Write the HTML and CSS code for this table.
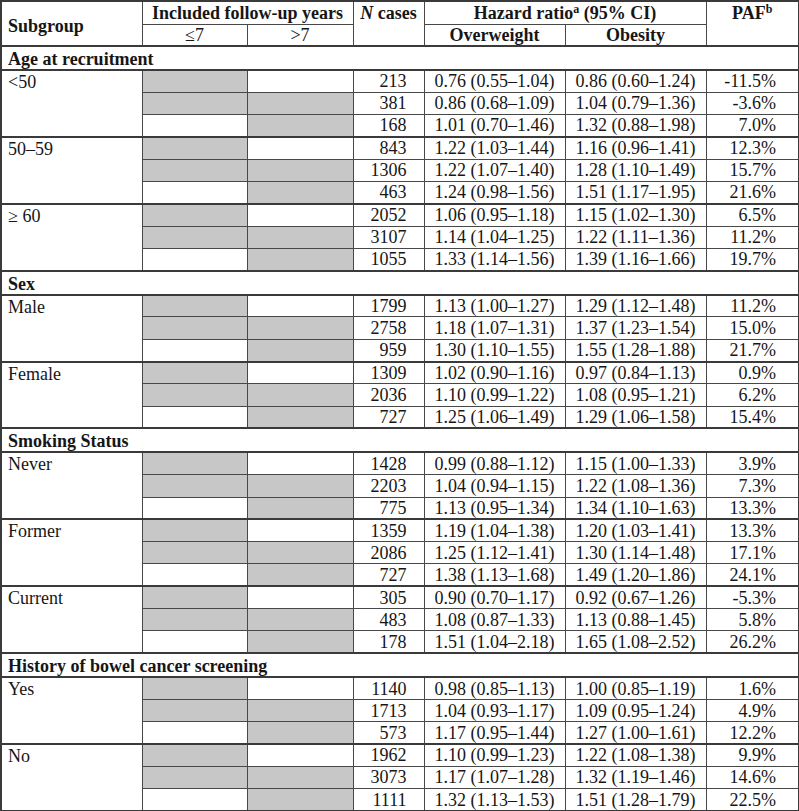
FILE: index.html
```html
<!DOCTYPE html>
<html>
<head>
<meta charset="utf-8">
<link rel="stylesheet" href="styles.css">
</head>
<body>
<table class="tbl">
<colgroup>
<col class="c-sub"><col class="c-y1"><col class="c-y2"><col class="c-n"><col class="c-ow"><col class="c-ob"><col class="c-paf">
</colgroup>
<thead>
<tr class="h1">
<th rowspan="2" class="h-sub"><span class="sub-txt">Subgroup</span></th>
<th colspan="2" class="h-c">Included follow-up years</th>
<th rowspan="2" class="h-top"><i>N</i> cases</th>
<th colspan="2" class="h-c">Hazard ratio<sup>a</sup> (95% CI)</th>
<th rowspan="2" class="h-top">PAF<sup>b</sup></th>
</tr>
<tr class="h2">
<th class="h-reg">≤7</th>
<th class="h-reg">&gt;7</th>
<th class="h-c">Overweight</th>
<th class="h-c">Obesity</th>
</tr>
</thead>
<tbody>
<tr class="sec"><td colspan="7">Age at recruitment</td></tr>
<tr class="first"><td rowspan="3" class="lab">&lt;50</td><td class="g"></td><td></td><td class="n">213</td><td class="hr">0.76 (0.55–1.04)</td><td class="hr">0.86 (0.60–1.24)</td><td class="paf">-11.5%</td></tr>
<tr><td class="g"></td><td class="g"></td><td class="n">381</td><td class="hr">0.86 (0.68–1.09)</td><td class="hr">1.04 (0.79–1.36)</td><td class="paf">-3.6%</td></tr>
<tr><td></td><td class="g"></td><td class="n">168</td><td class="hr">1.01 (0.70–1.46)</td><td class="hr">1.32 (0.88–1.98)</td><td class="paf">7.0%</td></tr>
<tr class="first"><td rowspan="3" class="lab">50–59</td><td class="g"></td><td></td><td class="n">843</td><td class="hr">1.22 (1.03–1.44)</td><td class="hr">1.16 (0.96–1.41)</td><td class="paf">12.3%</td></tr>
<tr><td class="g"></td><td class="g"></td><td class="n">1306</td><td class="hr">1.22 (1.07–1.40)</td><td class="hr">1.28 (1.10–1.49)</td><td class="paf">15.7%</td></tr>
<tr><td></td><td class="g"></td><td class="n">463</td><td class="hr">1.24 (0.98–1.56)</td><td class="hr">1.51 (1.17–1.95)</td><td class="paf">21.6%</td></tr>
<tr class="first"><td rowspan="3" class="lab">≥ 60</td><td class="g"></td><td></td><td class="n">2052</td><td class="hr">1.06 (0.95–1.18)</td><td class="hr">1.15 (1.02–1.30)</td><td class="paf">6.5%</td></tr>
<tr><td class="g"></td><td class="g"></td><td class="n">3107</td><td class="hr">1.14 (1.04–1.25)</td><td class="hr">1.22 (1.11–1.36)</td><td class="paf">11.2%</td></tr>
<tr><td></td><td class="g"></td><td class="n">1055</td><td class="hr">1.33 (1.14–1.56)</td><td class="hr">1.39 (1.16–1.66)</td><td class="paf">19.7%</td></tr>

<tr class="sec"><td colspan="7">Sex</td></tr>
<tr class="first"><td rowspan="3" class="lab">Male</td><td class="g"></td><td></td><td class="n">1799</td><td class="hr">1.13 (1.00–1.27)</td><td class="hr">1.29 (1.12–1.48)</td><td class="paf">11.2%</td></tr>
<tr><td class="g"></td><td class="g"></td><td class="n">2758</td><td class="hr">1.18 (1.07–1.31)</td><td class="hr">1.37 (1.23–1.54)</td><td class="paf">15.0%</td></tr>
<tr><td></td><td class="g"></td><td class="n">959</td><td class="hr">1.30 (1.10–1.55)</td><td class="hr">1.55 (1.28–1.88)</td><td class="paf">21.7%</td></tr>
<tr class="first"><td rowspan="3" class="lab">Female</td><td class="g"></td><td></td><td class="n">1309</td><td class="hr">1.02 (0.90–1.16)</td><td class="hr">0.97 (0.84–1.13)</td><td class="paf">0.9%</td></tr>
<tr><td class="g"></td><td class="g"></td><td class="n">2036</td><td class="hr">1.10 (0.99–1.22)</td><td class="hr">1.08 (0.95–1.21)</td><td class="paf">6.2%</td></tr>
<tr><td></td><td class="g"></td><td class="n">727</td><td class="hr">1.25 (1.06–1.49)</td><td class="hr">1.29 (1.06–1.58)</td><td class="paf">15.4%</td></tr>

<tr class="sec"><td colspan="7">Smoking Status</td></tr>
<tr class="first"><td rowspan="3" class="lab">Never</td><td class="g"></td><td></td><td class="n">1428</td><td class="hr">0.99 (0.88–1.12)</td><td class="hr">1.15 (1.00–1.33)</td><td class="paf">3.9%</td></tr>
<tr><td class="g"></td><td class="g"></td><td class="n">2203</td><td class="hr">1.04 (0.94–1.15)</td><td class="hr">1.22 (1.08–1.36)</td><td class="paf">7.3%</td></tr>
<tr><td></td><td class="g"></td><td class="n">775</td><td class="hr">1.13 (0.95–1.34)</td><td class="hr">1.34 (1.10–1.63)</td><td class="paf">13.3%</td></tr>
<tr class="first"><td rowspan="3" class="lab">Former</td><td class="g"></td><td></td><td class="n">1359</td><td class="hr">1.19 (1.04–1.38)</td><td class="hr">1.20 (1.03–1.41)</td><td class="paf">13.3%</td></tr>
<tr><td class="g"></td><td class="g"></td><td class="n">2086</td><td class="hr">1.25 (1.12–1.41)</td><td class="hr">1.30 (1.14–1.48)</td><td class="paf">17.1%</td></tr>
<tr><td></td><td class="g"></td><td class="n">727</td><td class="hr">1.38 (1.13–1.68)</td><td class="hr">1.49 (1.20–1.86)</td><td class="paf">24.1%</td></tr>
<tr class="first"><td rowspan="3" class="lab">Current</td><td class="g"></td><td></td><td class="n">305</td><td class="hr">0.90 (0.70–1.17)</td><td class="hr">0.92 (0.67–1.26)</td><td class="paf">-5.3%</td></tr>
<tr><td class="g"></td><td class="g"></td><td class="n">483</td><td class="hr">1.08 (0.87–1.33)</td><td class="hr">1.13 (0.88–1.45)</td><td class="paf">5.8%</td></tr>
<tr><td></td><td class="g"></td><td class="n">178</td><td class="hr">1.51 (1.04–2.18)</td><td class="hr">1.65 (1.08–2.52)</td><td class="paf">26.2%</td></tr>

<tr class="sec"><td colspan="7">History of bowel cancer screening</td></tr>
<tr class="first"><td rowspan="3" class="lab">Yes</td><td class="g"></td><td></td><td class="n">1140</td><td class="hr">0.98 (0.85–1.13)</td><td class="hr">1.00 (0.85–1.19)</td><td class="paf">1.6%</td></tr>
<tr><td class="g"></td><td class="g"></td><td class="n">1713</td><td class="hr">1.04 (0.93–1.17)</td><td class="hr">1.09 (0.95–1.24)</td><td class="paf">4.9%</td></tr>
<tr><td></td><td class="g"></td><td class="n">573</td><td class="hr">1.17 (0.95–1.44)</td><td class="hr">1.27 (1.00–1.61)</td><td class="paf">12.2%</td></tr>
<tr class="first"><td rowspan="3" class="lab">No</td><td class="g"></td><td></td><td class="n">1962</td><td class="hr">1.10 (0.99–1.23)</td><td class="hr">1.22 (1.08–1.38)</td><td class="paf">9.9%</td></tr>
<tr><td class="g"></td><td class="g"></td><td class="n">3073</td><td class="hr">1.17 (1.07–1.28)</td><td class="hr">1.32 (1.19–1.46)</td><td class="paf">14.6%</td></tr>
<tr><td></td><td class="g"></td><td class="n">1111</td><td class="hr">1.32 (1.13–1.53)</td><td class="hr">1.51 (1.28–1.79)</td><td class="paf">22.5%</td></tr>
</tbody>
</table>
</body>
</html>
```

FILE: styles.css
```css
html, body {
  margin: 0;
  padding: 0;
  background: #ffffff;
}
body {
  font-family: "Liberation Serif", "Times New Roman", serif;
  font-size: 18px;
  color: #161616;
}
.tbl {
  border-collapse: collapse;
  table-layout: fixed;
  width: 798px;
  border: 2px solid #3a3a3a;
}
.c-sub { width: 141px; }
.c-y1 { width: 105px; }
.c-y2 { width: 106px; }
.c-n { width: 71px; }
.c-ow { width: 141px; }
.c-ob { width: 141px; }
.c-paf { width: 93px; }

.tbl th, .tbl td {
  border: 1px solid #484848;
  padding: 0;
  line-height: 20px;
}
.tbl th {
  font-weight: bold;
}
.tbl .h1 { height: 23px; }
.tbl .h2 { height: 22px; }
.tbl th.h-sub {
  text-align: left;
  padding-top: 4px;
  vertical-align: middle;
}
.sub-txt {
  display: block;
  padding-left: 6px;
}
.tbl .h-c {
  text-align: center;
  vertical-align: middle;
}
.tbl .h-reg {
  font-weight: normal;
  text-align: center;
}
.tbl .h-top {
  vertical-align: top;
  text-align: center;
  padding-top: 1px;
}
.tbl .h2 th { border-bottom: 2px solid #3a3a3a; }
sup {
  font-size: 12px;
  line-height: 0;
  vertical-align: 6px;
}

.tbl .sec { height: 24px; }
.tbl .sec td {
  font-weight: bold;
  padding-left: 6px;
  padding-top: 2px;
  border-top: 2px solid #3a3a3a;
  border-bottom: 2px solid #3a3a3a;
}
.tbl tbody tr { height: 22.3px; }
.tbl tr.first td { border-top: 2px solid #3a3a3a; }
.tbl .lab {
  vertical-align: top;
  padding-left: 6px;
  padding-top: 1px;
}
.tbl .g { background: #c7c7c7; }
.tbl .n {
  text-align: right;
  padding-right: 17px;
}
.tbl .hr {
  text-align: center;
}
.tbl .paf {
  text-align: right;
  padding-right: 22px;
}
```
